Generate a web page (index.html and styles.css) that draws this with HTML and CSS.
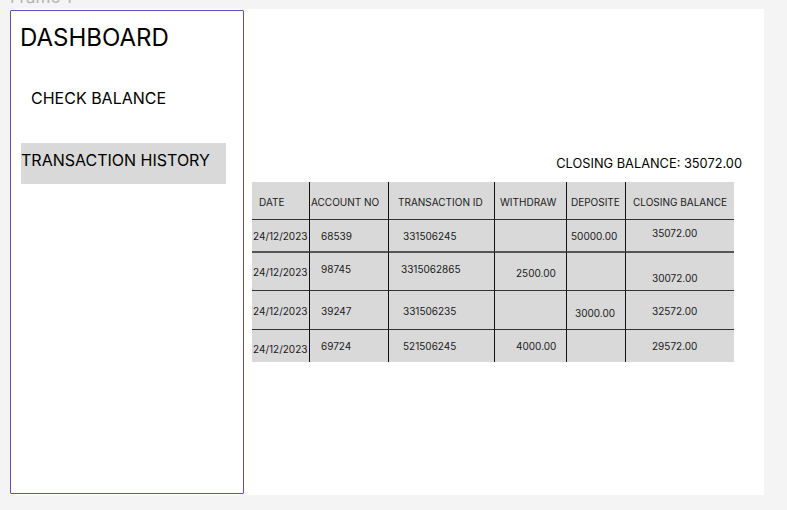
FILE: index.html
```html
<!DOCTYPE html>
<html lang="en">
<head>
<meta charset="utf-8">
<title>Dashboard - Transaction History</title>
<link rel="stylesheet" href="styles.css">
</head>
<body>
  <div class="frame-label">Frame 1</div>
  <div class="frame">
    <aside class="sidebar">
      <h1 class="brand">DASHBOARD</h1>
      <nav class="nav">
        <a class="nav-item nav-check">CHECK BALANCE</a>
        <a class="nav-item nav-active">TRANSACTION HISTORY</a>
      </nav>
    </aside>
    <main class="content">
      <div class="closing">CLOSING BALANCE: 35072.00</div>
      <div class="ledger">
        <div class="cell head c-date">DATE</div>
        <div class="cell head c-acct">ACCOUNT NO</div>
        <div class="cell head c-txn">TRANSACTION ID</div>
        <div class="cell head c-wd">WITHDRAW</div>
        <div class="cell head c-dep">DEPOSITE</div>
        <div class="cell head c-bal">CLOSING BALANCE</div>

        <div class="cell c-date row-top">24/12/2023</div>
        <div class="cell c-acct row-top">68539</div>
        <div class="cell c-txn row-top">331506245</div>
        <div class="cell c-wd row-top"></div>
        <div class="cell c-dep row-top">50000.00</div>
        <div class="cell c-bal row-top shift-up">35072.00</div>

        <div class="cell c-date row-top thick">24/12/2023</div>
        <div class="cell c-acct row-top thick shift-up">98745</div>
        <div class="cell c-txn row-top thick shift-up tight">3315062865</div>
        <div class="cell c-wd row-top thick shift-down-sm">2500.00</div>
        <div class="cell c-dep row-top thick"></div>
        <div class="cell c-bal row-top thick shift-down-lg">30072.00</div>

        <div class="cell c-date row-top shift-down-sm">24/12/2023</div>
        <div class="cell c-acct row-top shift-down-sm">39247</div>
        <div class="cell c-txn row-top shift-down-sm">331506235</div>
        <div class="cell c-wd row-top"></div>
        <div class="cell c-dep row-top shift-down wide">3000.00</div>
        <div class="cell c-bal row-top shift-down-sm">32572.00</div>

        <div class="cell c-date row-top shift-down">24/12/2023</div>
        <div class="cell c-acct row-top">69724</div>
        <div class="cell c-txn row-top">521506245</div>
        <div class="cell c-wd row-top">4000.00</div>
        <div class="cell c-dep row-top"></div>
        <div class="cell c-bal row-top">29572.00</div>
      </div>
    </main>
  </div>
</body>
</html>
```

FILE: styles.css
```css
html, body {
  margin: 0;
  padding: 0;
}

body {
  background: #f4f4f4;
  font-family: Inter, "Noto Sans", sans-serif;
  color: #000;
  display: flex;
  flex-direction: column;
  align-items: flex-start;
  height: 510px;
  overflow: hidden;
}

.frame-label {
  margin: -11px 0 3px 10px;
  font-size: 17px;
  line-height: 17px;
  height: 17px;
  color: #b3b3b3;
}

.frame {
  margin-left: 10px;
  width: 754px;
  height: 486px;
  background: #fff;
  display: flex;
  align-items: flex-start;
}

.sidebar {
  box-sizing: border-box;
  margin-top: 1px;
  width: 234px;
  height: 484px;
  border: 1px solid #5a4fbf;
  border-radius: 1px;
  padding: 15px 0 0 10px;
  display: flex;
  flex-direction: column;
}

.brand {
  margin: 0 0 0 -1px;
  font-size: 24px;
  line-height: 24px;
  font-weight: 400;
}

.nav {
  display: flex;
  flex-direction: column;
  align-items: flex-start;
}

.nav-item {
  font-size: 16px;
  line-height: 16px;
  color: #000;
}

.nav-check {
  margin: 40px 0 0 10px;
}

.nav-active {
  margin-top: 37px;
  box-sizing: border-box;
  width: 205px;
  height: 41px;
  padding-top: 9px;
  background: #d9d9d9;
}

.content {
  flex: 1;
  display: flex;
  flex-direction: column;
  padding: 148px 0 0 8px;
}

.closing {
  align-self: flex-end;
  margin-right: 22px;
  font-size: 12.8px;
  line-height: 13px;
  margin-bottom: 12px;
}

.ledger {
  width: 482px;
  height: 180px;
  background: #d9d9d9;
  display: grid;
  grid-template-columns: 57px 79px 106px 72px 59px 109px;
  grid-template-rows: 37px 32px 39px 39px 33px;
}

.cell {
  box-sizing: border-box;
  display: flex;
  align-items: center;
  font-size: 10px;
  line-height: 12px;
  color: #1a1a1a;
  white-space: nowrap;
}

.cell + .cell:not(.c-date) {
  border-left: 1px solid #111;
}

.row-top {
  border-top: 1px solid #333;
}

.row-top.thick {
  border-top: 2px solid #555;
}

.head {
  padding-top: 3px;
}

.c-date { padding-left: 1px; }
.c-acct { padding-left: 11px; }
.c-txn { padding-left: 14px; }
.c-wd { padding-left: 21px; }
.c-dep { padding-left: 4px; }
.c-bal { padding-left: 26px; }

.head.c-date { padding-left: 7px; }
.head.c-acct { padding-left: 1px; }
.head.c-txn { padding-left: 9px; }
.head.c-wd { padding-left: 5px; }
.head.c-dep { padding-left: 4px; }
.head.c-bal { padding-left: 7px; }

.tight { padding-left: 12px; }
.wide { padding-left: 8px; }

.shift-up { padding-bottom: 6px; }
.shift-down-sm { padding-top: 2px; }
.shift-down { padding-top: 6px; }
.shift-down-lg { padding-top: 12px; }
```
